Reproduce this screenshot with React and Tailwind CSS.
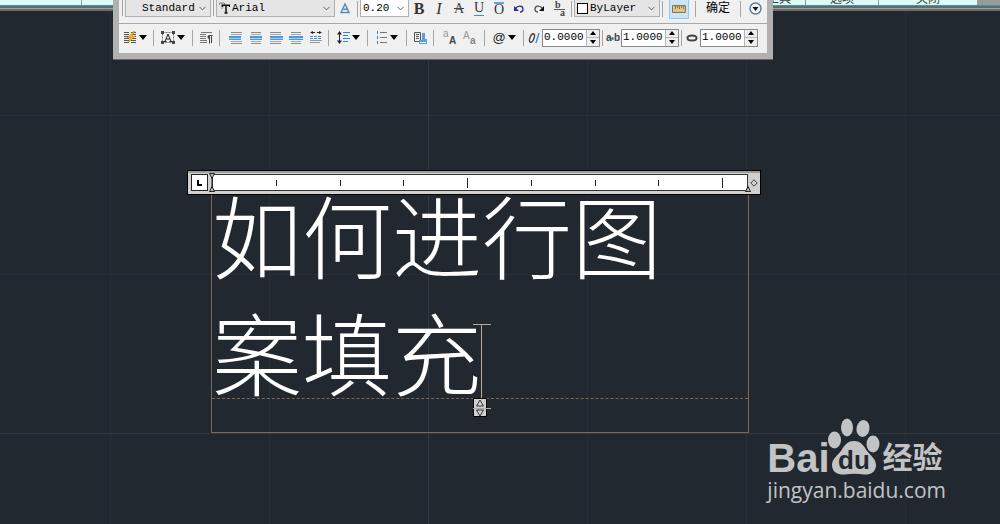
import { useState } from 'react'
import { ChevronDown } from 'lucide-react'

const ticks = ['h-1.5', 'h-1.5', 'h-1.5', 'h-2.5', 'h-1.5', 'h-1.5', 'h-1.5', 'h-2.5']

function Sep() {
  return <span className="mx-0.5 h-4 w-px shrink-0 bg-[#a5a5a5]" />
}

function Tool({ label, className = 'w-5', children }) {
  return (
    <button type="button" aria-label={label} className={`flex h-5 shrink-0 items-center justify-center hover:bg-[#d8eaf9] ${className}`}>
      {children}
    </button>
  )
}

/* Button with a small black arrow beside its icon */
function DropTool({ label, className = 'w-[34px]', children }) {
  return (
    <Tool label={label} className={`gap-0.5 ${className}`}>
      {children}
      <svg width="8" height="5" viewBox="0 0 8 5"><path d="M0 0h8L4 5z" fill="#000" /></svg>
    </Tool>
  )
}

function Combo({ label, options, className, icon }) {
  return (
    <span className={`flex h-[17px] shrink-0 items-center border border-t-0 border-[#b0b0b0] ${className}`}>
      {icon}
      <select aria-label={label} className="min-w-0 flex-1 appearance-none bg-transparent text-[11px] leading-4 outline-none">
        {options.map((o) => <option key={o}>{o}</option>)}
      </select>
      <ChevronDown className="mr-0.5 shrink-0 text-[#555]" size={11} strokeWidth={2} />
    </span>
  )
}

function Spin({ label, start, icon }) {
  const [value, setValue] = useState(start)
  const step = (d) => setValue((Number(value) + d).toFixed(4))
  return (
    <span className="flex shrink-0 items-center">
      <span className="flex w-4 justify-center">{icon}</span>
      <span className="flex h-[18px] w-[58px] border border-[#8a8a8a] bg-white">
        <input aria-label={label} value={value} onChange={(e) => setValue(e.target.value)} className="w-[43px] pl-px text-[11px] outline-none" />
        <span className="flex flex-1 flex-col gap-px bg-[#b8b8b8] pl-px">
          <button type="button" aria-label="Increase" onClick={() => step(1)} className="flex flex-1 items-center justify-center bg-[#eeeeee]">
            <svg width="6" height="4" viewBox="0 0 6 4"><path d="M0 4h6L3 0z" /></svg>
          </button>
          <button type="button" aria-label="Decrease" onClick={() => step(-1)} className="flex flex-1 items-center justify-center bg-[#eeeeee]">
            <svg width="6" height="4" viewBox="0 0 6 4"><path d="M0 0h6L3 4z" /></svg>
          </button>
        </span>
      </span>
    </span>
  )
}

/* Paragraph alignment: grey lines outside, blue lines in the middle */
function AlignIcon({ x = 2, w = 10, bx = 1, bw = 12 }) {
  return (
    <svg width="14" height="12" viewBox="0 0 14 12" shapeRendering="crispEdges">
      <rect x={x} y="0" width={w} height="1" fill="#8c8c8c" />
      <rect x={x} y="2" width={w} height="1" fill="#a8a8a8" />
      <rect x={bx} y="4" width={bw} height="2" fill="#4a98e0" />
      <rect x={bx} y="6" width={bw} height="1" fill="#a9d0f2" />
      <rect x={bx} y="7" width={bw} height="1" fill="#4a98e0" />
      <rect x={x} y="9" width={w} height="1" fill="#a8a8a8" />
      <rect x={x} y="11" width={w} height="1" fill="#8c8c8c" />
    </svg>
  )
}

function Ribbon() {
  return (
    <header className="border-b-2 border-[#6c6c6c]">
      <div className="flex h-[5px] items-end overflow-hidden bg-[#dffaf8] text-center text-xs leading-3 text-[#444]">
        <span className="h-full w-[82px] border-r border-[#8a9a9a]" />
        <span className="flex-1" />
        <span className="w-[53px] border-r border-[#8a9a9a]">工具</span>
        <span className="w-[73px] border-r border-[#8a9a9a]">选项</span>
        <span className="w-[98px]">关闭</span>
        <span className="h-full w-[23px] bg-[#9a9a9a]" />
      </div>
      <div className="h-px bg-[#2ba3a0]" />
      <div className="h-[3px] border-b border-[#a0a0a0] bg-[#686868]" />
    </header>
  )
}

function FormatRow() {
  return (
    <div className="flex h-[24px] items-start border-b border-[#a8a8a8] pl-px">
      <Sep />
      <Combo label="Style" options={['Standard']} className="w-[86px] bg-[#e5e5e5] pl-4" />
      <Sep />
      <Combo
        label="Font"
        options={['Arial']}
        className="w-[119px] bg-[#e5e5e5] pl-0.5"
        icon={
          <svg width="11" height="12" viewBox="0 0 11 12" className="mr-0.5 shrink-0">
            <path d="M.5 3V1h5v2M3 1v6" fill="none" stroke="#888" />
            <path d="M3.5 5V3.2h7V5M7 3v8M5.5 11h3" fill="none" stroke="#111" strokeWidth="1.5" />
          </svg>
        }
      />
      <div className="flex h-[17px] items-center">
        <Tool label="Annotative">
          <svg width="10" height="11" viewBox="0 0 10 11">
            <path d="M1 9.5 5 1l4 8.5zM3.4 6.2h3.4" fill="none" stroke="#5c8db5" strokeWidth="1.5" />
          </svg>
        </Tool>
        <Sep />
        <Combo label="Text height" options={['0.20']} className="w-[49px] bg-white pl-0.5" />
        <Tool label="Bold"><b className="font-['Liberation_Serif',serif] text-base text-[#333]">B</b></Tool>
        <Tool label="Italic"><i className="font-['Liberation_Serif',serif] text-base text-[#333]">I</i></Tool>
        <Tool label="Strikethrough"><s className="font-['Liberation_Serif',serif] text-sm text-[#444]">A</s></Tool>
        <Tool label="Underline">
          <span className="h-[14px] border-b border-[#3d8fd6] font-['Liberation_Serif',serif] text-sm leading-3 text-[#333]">U</span>
        </Tool>
        <Tool label="Overline">
          <span className="h-[14px] border-t-2 border-[#5ea5e0] font-['Liberation_Serif',serif] text-sm leading-3 text-[#333]">O</span>
        </Tool>
        <Tool label="Undo">
          <svg width="12" height="10" viewBox="0 0 12 10">
            <path d="M2.5 4.5C5 1 10 1.500 10 5.200 10 7 8.500 8 7 8" fill="none" stroke="#2a2a9a" strokeWidth="1.3" />
            <path d="M1 2v5h5z" fill="#2a2a9a" />
          </svg>
        </Tool>
        <Tool label="Redo">
          <svg width="12" height="10" viewBox="0 0 12 10">
            <path d="M9.500 4.500C7 1 2 1.500 2 5.200 2 7 3.500 8 5 8" fill="none" stroke="#555" strokeWidth="1.3" />
            <path d="M11 2v5H6z" fill="#111" />
          </svg>
        </Tool>
        <Tool label="Stack">
          <svg width="13" height="15" viewBox="0 0 13 15" className="font-['Liberation_Serif',serif] text-[10px] font-bold" fill="#444">
            <text x="2" y="7">b</text>
            <path d="M1 8.500h11" stroke="#555" />
            <text x="7" y="15">a</text>
          </svg>
        </Tool>
        <Sep />
        <Combo
          label="Color"
          options={['ByLayer']}
          className="w-[86px] bg-[#e5e5e5] pl-0.5"
          icon={<span className="mr-0.5 size-[11px] shrink-0 border border-black bg-white" />}
        />
        <Sep />
        <Tool label="Ruler" className="mx-1 w-5 border border-[#90c8f6] bg-[#cce4f7]">
          <svg width="14" height="8" viewBox="0 0 14 8">
            <path d="M.5.5h13v7H.5z" fill="#d9c594" stroke="#8a7442" />
            <path d="M3.500 1v3M5.500 1v2M7.500 1v3M9.500 1v2M11.500 1v3" stroke="#8a7442" />
          </svg>
        </Tool>
        <Sep />
        <Tool label="OK" className="w-10 text-xs">确定</Tool>
        <Sep />
        <Tool label="Options" className="w-6">
          <svg width="13" height="13" viewBox="0 0 13 13">
            <circle cx="6.500" cy="6.500" r="5.500" fill="#eef4fa" stroke="#5c7896" strokeWidth="1.4" />
            <path d="M3.500 5h6l-3 4z" fill="#111" />
          </svg>
        </Tool>
      </div>
    </div>
  )
}

function ParagraphRow() {
  return (
    <div className="flex h-[29px] items-center pb-0.5">
      <DropTool label="Columns" className="w-8">
        <svg width="13" height="13" viewBox="0 0 13 13">
          <path d="M0 1.500h5M0 3.500h5M0 5.500h5M0 7.500h5M0 9.500h5M0 11.500h5M7 1.500h5M7 3.500h5M7 5.500h5M7 7.500h5M7 9.500h5M7 11.500h5" stroke="#555" />
          <path d="M10 0 3 7h3l-2 5 7-7H8l3-5z" fill="#f2ae21" stroke="#b47a0c" strokeWidth=".4" />
        </svg>
      </DropTool>
      <Sep />
      <DropTool label="Justification">
        <svg width="14" height="13" viewBox="0 0 14 13">
          <path d="M1.500 1.500h11v10h-11z" fill="none" stroke="#777" strokeDasharray="2 1" />
          <path d="M0 0h3v3H0zM11 0h3v3h-3zM0 10h3v3H0zM11 10h3v3h-3z" fill="#444" />
          <path d="M4 10.500 7 3l3 7.500M5 8h4M3 10.500h2.500M8.500 10.500H11" fill="none" stroke="#222" />
        </svg>
      </DropTool>
      <Sep />
      <Tool label="Paragraph" className="w-[22px]">
        <svg width="13" height="12" viewBox="0 0 13 12">
          <path d="M1 .5h11M0 2.500h6M0 4.500h6M0 6.500h6M0 8.500h7M0 10.500h7" stroke="#777" />
          <path d="M9.500 3a2 2 0 0 0 0 4z" fill="#444" />
          <path d="M12.500 3.500H9.500v8M11.500 3v8" fill="none" stroke="#444" />
        </svg>
      </Tool>
      <Sep />
      <div className="flex pl-1">
        <Tool label="Left"><AlignIcon bx={0} w={11} /></Tool>
        <Tool label="Center"><AlignIcon /></Tool>
        <Tool label="Right"><AlignIcon x={1} w={11} bw={13} /></Tool>
        <Tool label="Justify"><AlignIcon bx={0} bw={14} /></Tool>
        <Tool label="Distribute">
          <svg width="12" height="13" viewBox="0 0 12 13">
            <path d="M1 1.500h4M7 1.500h4" stroke="#222" />
            <path d="M0 1.500 3 0v3zM12 1.500 9 0v3z" fill="#222" />
            <path d="M0 5.500h12M0 7.500h12" stroke="#3f8fdc" strokeDasharray="3 1" />
            <path d="M0 9.500h12M0 11.500h10" stroke="#999" />
          </svg>
        </Tool>
      </div>
      <Sep />
      <DropTool label="Line spacing">
        <svg width="13" height="13" viewBox="0 0 13 13">
          <path d="M2.500 2v9" stroke="#222" />
          <path d="M0 3.500 2.500 0 5 3.500zM0 9.500 2.500 13 5 9.500z" fill="#222" />
          <path d="M6 1.500h7M6 4.500h5M6 7.500h7M6 10.500h5" stroke="#2b86dc" />
        </svg>
      </DropTool>
      <Sep />
      <DropTool label="Numbering">
        <svg width="12" height="13" viewBox="0 0 12 13">
          <path d="M1.500 0v3M1.500 5v3M1.500 10v3" stroke="#2b86dc" />
          <path d="M4 1.500h7M4 6.500h7M4 11.500h7" stroke="#777" />
        </svg>
      </DropTool>
      <Sep />
      <Tool label="Insert field" className="w-[22px]">
        <svg width="13" height="12" viewBox="0 0 13 12">
          <path d="M.5.5h6v9h-6zM2 2.500h3M2 4.500h3M2 6.500h3" fill="none" stroke="#555" />
          <path d="M8 1h3v6h2v5H5V8h3z" fill="#5a9fdc" />
          <path d="M6 10.500h6" stroke="#fff" />
        </svg>
      </Tool>
      <Sep />
      <div className="flex px-[3px]">
        <Tool label="Uppercase">
          <svg width="15" height="14" viewBox="0 0 15 14" className="text-[10px]" fontFamily="Liberation Sans">
            <text x="1" y="6" fill="#999">a</text>
            <text x="7" y="13" fill="#444" fontWeight="bold">A</text>
          </svg>
        </Tool>
        <Tool label="Lowercase">
          <svg width="15" height="14" viewBox="0 0 15 14" className="text-[10px]" fontFamily="Liberation Sans">
            <text x="1" y="8" fill="#999">A</text>
            <text x="8" y="13" fill="#888" fontWeight="bold">a</text>
          </svg>
        </Tool>
      </div>
      <Sep />
      <DropTool label="Symbol"><span className="font-['Liberation_Sans',sans-serif] text-[13px] text-[#222]">@</span></DropTool>
      <Sep />
      <Spin
        label="Oblique angle"
        start="0.0000"
        icon={
          <svg width="12" height="12" viewBox="0 0 12 12">
            <ellipse cx="4" cy="6" rx="2" ry="4.500" transform="rotate(20 4 6)" fill="none" stroke="#444" strokeWidth="1.4" />
            <path d="M8 11 11 1" stroke="#3d8fd6" strokeWidth="1.4" />
          </svg>
        }
      />
      <Sep />
      <Spin
        label="Tracking"
        start="1.0000"
        icon={
          <svg width="14" height="10" viewBox="0 0 14 10" className="text-[10px] font-bold" fontFamily="Liberation Sans" fill="#444">
            <text x="0" y="8">a</text>
            <circle cx="6.500" cy="5.500" r="1.500" fill="#2b82d0" />
            <text x="8" y="8">b</text>
          </svg>
        }
      />
      <Sep />
      <Spin
        label="Width factor"
        start="1.0000"
        icon={<svg width="12" height="8" viewBox="0 0 12 8"><ellipse cx="6" cy="4" rx="4.500" ry="2.500" fill="none" stroke="#444" strokeWidth="2" /></svg>}
      />
    </div>
  )
}

function TextEditor() {
  const [text, setText] = useState('如何进行图案填充')
  return (
    <section className="absolute top-[170px] left-[187px] w-[574px]">
      <div className="relative z-10 flex h-[25px] items-center border border-black bg-[#d0d0d0] pl-[3px] shadow-[inset_0_2px_0_#9c9c9c]">
        <button type="button" aria-label="Tab stop" className="mr-1 flex size-[17px] items-center justify-center border border-[#222] bg-white">
          <svg width="5" height="6" viewBox="0 0 5 6"><path d="M1 0v5h4" fill="none" stroke="#000" strokeWidth="2" /></svg>
        </button>
        <div className="relative h-[17px] w-[536px] border border-[#333] bg-white">
          <div className="grid h-full w-[510px] grid-cols-8 items-center">
            {ticks.map((h, i) => <span key={i} className={`border-r border-[#222] ${h}`} />)}
          </div>
          <svg width="6" height="19" viewBox="0 0 6 19" className="absolute -top-0.5 -left-1">
            <path d="M.5.5h5L3 5.500zM3 5v9M.5 18.500h5L3 13.500z" fill="#bbb" stroke="#222" />
          </svg>
          <svg width="6" height="6" viewBox="0 0 6 6" className="absolute -right-1 -bottom-0.5">
            <path d="M.5 5.500h5L3 .5z" fill="#bbb" stroke="#222" />
          </svg>
        </div>
        <svg width="8" height="8" viewBox="0 0 8 8" className="ml-0.5 shrink-0">
          <path d="M4 .8 7.200 4 4 7.200.8 4z" fill="none" stroke="#444" />
        </svg>
      </div>
      <div className="ml-6 flow-root h-[238px] w-[538px] border border-t-0 border-[#7a675b]">
        <textarea
          aria-label="Text"
          spellCheck="false"
          value={text}
          onChange={(e) => setText(e.target.value)}
          className="-mt-3 block h-[216px] w-full resize-none overflow-hidden border-b border-dashed border-[#7a675b] text-[90px] leading-[117px] font-light text-white outline-none"
        />
      </div>
      {/* Caret and line height grip */}
      <svg width="18" height="94" viewBox="0 0 18 94" className="absolute top-[154px] left-[286px]">
        <path d="M0 .5h18M8.500 0v75" stroke="#b5aa9c" fill="none" />
        <path d="M.5 74.500h13v18H.5z" fill="#d0d0d0" stroke="#000" />
        <path d="M3.500 82h7L7 76zM3.500 86h7L7 92z" fill="none" stroke="#333" />
        <path d="M0 84.500h18" stroke="#b5aa9c" />
      </svg>
    </section>
  )
}

function Watermark() {
  return (
    <div className="absolute right-[54px] bottom-[20px] text-[#c2c3c4]">
      <div className="flex items-end font-bold">
        <span className="font-['Liberation_Sans',sans-serif] text-[40px] leading-9">Bai</span>
        <svg width="53" height="58" viewBox="0 0 53 58" fill="currentColor" className="-ml-0.5">
          <ellipse cx="6.500" cy="22" rx="6.500" ry="8.500" />
          <ellipse cx="19" cy="9.500" rx="6" ry="9" />
          <ellipse cx="35" cy="10.500" rx="6.500" ry="8.500" transform="rotate(10 35 10.500)" />
          <ellipse cx="45" cy="26" rx="6.500" ry="8.500" />
          <path d="M26 23c7 0 10 5 13 10 4 5 9 8 9 14 0 8-7 10-12 9.500-6-1-13-1-19 0C11 57 4 55 4 47c0-6 5-9 9-14 3-5 6-10 13-10z" />
          <text x="10" y="51" fill="#212830" className="font-['Liberation_Sans',sans-serif] text-[26px]">du</text>
        </svg>
        <span className="ml-0.5 text-[30px] leading-9">经验</span>
      </div>
      <a href="#jingyan" className="block font-['Open_Sans',sans-serif] text-[21px] leading-7">jingyan.baidu.com</a>
    </div>
  )
}

export default function App() {
  return (
    <main className="relative min-h-screen overflow-hidden bg-[#212830] font-['Liberation_Sans','Noto_Sans_CJK_SC',sans-serif]">
      {/* Drawing grid */}
      <div className="absolute inset-0 bg-[linear-gradient(to_right,#262e38_1px,transparent_1px),linear-gradient(to_bottom,#262e38_1px,transparent_1px)] bg-[size:159px_159px] bg-[position:110px_115px]" />
      <div className="absolute inset-y-0 left-[428px] w-px bg-[#303844]" />
      <div className="absolute inset-x-0 top-[433px] h-px bg-[#303844]" />
      <div className="relative"><Ribbon /></div>
      <div className="absolute top-0 left-[113px] w-[660px] border-x-[6px] border-b-[6px] border-[#b1b1b1] bg-[#f0f0f0] font-['Liberation_Mono','Noto_Sans_CJK_SC',monospace] text-black shadow-[0_1px_0_#666]">
        <FormatRow />
        <ParagraphRow />
      </div>
      <TextEditor />
      <Watermark />
    </main>
  )
}
